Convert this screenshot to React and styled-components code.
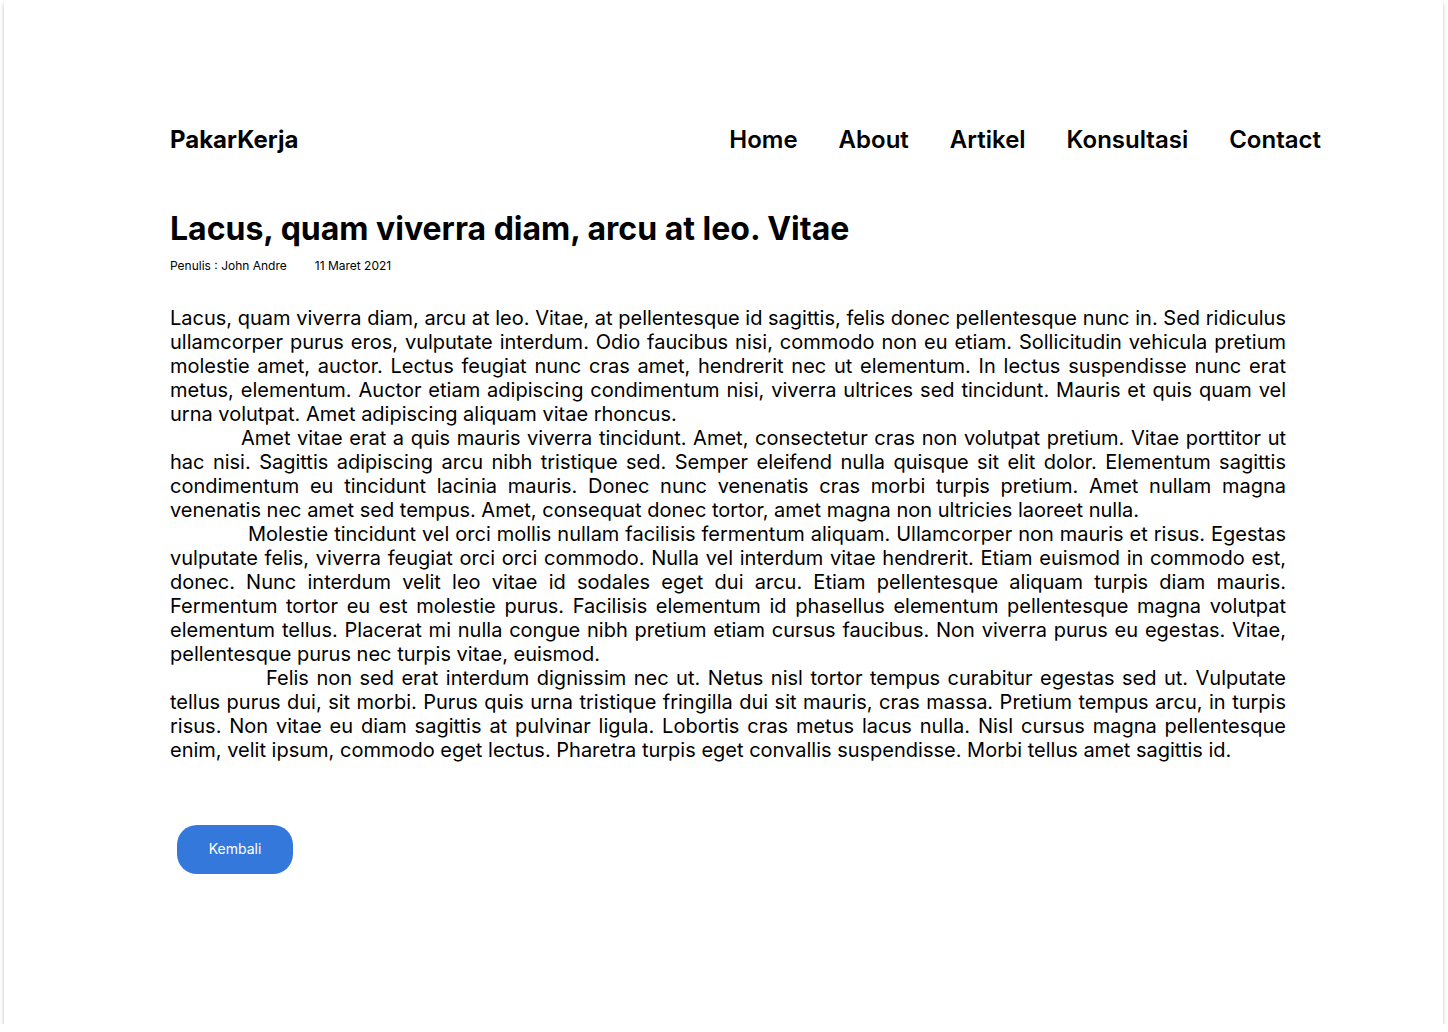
import React from "react";
import styled, { createGlobalStyle } from "styled-components";

const Global = createGlobalStyle`
  html, body { margin: 0; padding: 0; background: #ffffff; }
  body { font-family: Inter, "Noto Sans", sans-serif; color: #000; }
`;

const Card = styled.div`
  box-sizing: border-box;
  margin-left: 4px;
  width: 1439px;
  height: 1024px;
  background: #fff;
  box-shadow: 0 4px 4px rgba(0, 0, 0, 0.25);
  padding: 125px 122px 0 166px;
  display: flex;
  flex-direction: column;
`;

const Header = styled.header`
  display: flex;
  align-items: center;
  justify-content: space-between;
  height: 29px;
`;

const Logo = styled.div`
  font-size: 24px;
  font-weight: 700;
  line-height: 29px;
`;

const Nav = styled.nav`
  display: flex;
  gap: 41px;
`;

const NavLink = styled.a`
  font-size: 24px;
  font-weight: 600;
  line-height: 29px;
  color: #000;
  text-decoration: none;
`;

const Article = styled.article`
  width: 1116px;
  margin-top: 55px;
`;

const Title = styled.h1`
  margin: 0;
  font-size: 32px;
  font-weight: 700;
  line-height: 39px;
`;

const Meta = styled.div`
  display: flex;
  gap: 28px;
  margin-top: 10px;
  font-size: 12px;
  line-height: 15px;
`;

const Body = styled.div`
  margin-top: 33px;
`;

const Para = styled.p`
  margin: 0;
  font-size: 20px;
  line-height: 24px;
  text-align: justify;
  text-indent: ${(p) => p.$indent || 0}px;
`;

const Button = styled.button`
  margin-top: 63px;
  margin-left: 7px;
  width: 116px;
  height: 49px;
  border: none;
  border-radius: 20px;
  background: #3478dc;
  color: #fff;
  font-family: Inter, "Noto Sans", sans-serif;
  font-size: 14px;
  line-height: 17px;
  padding: 0 0 2px;
  cursor: pointer;
`;

const paragraphs = [
  {
    indent: 0,
    text: "Lacus, quam viverra diam, arcu at leo. Vitae, at pellentesque id sagittis, felis donec pellentesque nunc in. Sed ridiculus ullamcorper purus eros, vulputate interdum. Odio faucibus nisi, commodo non eu etiam. Sollicitudin vehicula pretium molestie amet, auctor. Lectus feugiat nunc cras amet, hendrerit nec ut elementum. In lectus suspendisse nunc erat metus, elementum. Auctor etiam adipiscing condimentum nisi, viverra ultrices sed tincidunt. Mauris et quis quam vel urna volutpat. Amet adipiscing aliquam vitae rhoncus.",
  },
  {
    indent: 71,
    text: "Amet vitae erat a quis mauris viverra tincidunt. Amet, consectetur cras non volutpat pretium. Vitae porttitor ut hac nisi. Sagittis adipiscing arcu nibh tristique sed. Semper eleifend nulla quisque sit elit dolor. Elementum sagittis condimentum eu tincidunt lacinia mauris. Donec nunc venenatis cras morbi turpis pretium. Amet nullam magna venenatis nec amet sed tempus. Amet, consequat donec tortor, amet magna non ultricies laoreet nulla.",
  },
  {
    indent: 78,
    text: "Molestie tincidunt vel orci mollis nullam facilisis fermentum aliquam. Ullamcorper non mauris et risus. Egestas vulputate felis, viverra feugiat orci orci commodo. Nulla vel interdum vitae hendrerit. Etiam euismod in commodo est, donec. Nunc interdum velit leo vitae id sodales eget dui arcu. Etiam pellentesque aliquam turpis diam mauris. Fermentum tortor eu est molestie purus. Facilisis elementum id phasellus elementum pellentesque magna volutpat elementum tellus. Placerat mi nulla congue nibh pretium etiam cursus faucibus. Non viverra purus eu egestas. Vitae, pellentesque purus nec turpis vitae, euismod.",
  },
  {
    indent: 96,
    text: "Felis non sed erat interdum dignissim nec ut. Netus nisl tortor tempus curabitur egestas sed ut. Vulputate tellus purus dui, sit morbi. Purus quis urna tristique fringilla dui sit mauris, cras massa. Pretium tempus arcu, in turpis risus. Non vitae eu diam sagittis at pulvinar ligula. Lobortis cras metus lacus nulla. Nisl cursus magna pellentesque enim, velit ipsum, commodo eget lectus. Pharetra turpis eget convallis suspendisse. Morbi tellus amet sagittis id.",
  },
];

export default function App() {
  return (
    <>
      <Global />
      <Card>
        <Header>
          <Logo>PakarKerja</Logo>
          <Nav>
            {["Home", "About", "Artikel", "Konsultasi", "Contact"].map((n) => (
              <NavLink key={n} href="#">{n}</NavLink>
            ))}
          </Nav>
        </Header>
        <Article>
          <Title>Lacus, quam viverra diam, arcu at leo. Vitae</Title>
          <Meta>
            <span>Penulis : John Andre</span>
            <span>11 Maret 2021</span>
          </Meta>
          <Body>
            {paragraphs.map((p, i) => (
              <Para key={i} $indent={p.indent}>{p.text}</Para>
            ))}
          </Body>
        </Article>
        <div>
          <Button>Kembali</Button>
        </div>
      </Card>
    </>
  );
}
